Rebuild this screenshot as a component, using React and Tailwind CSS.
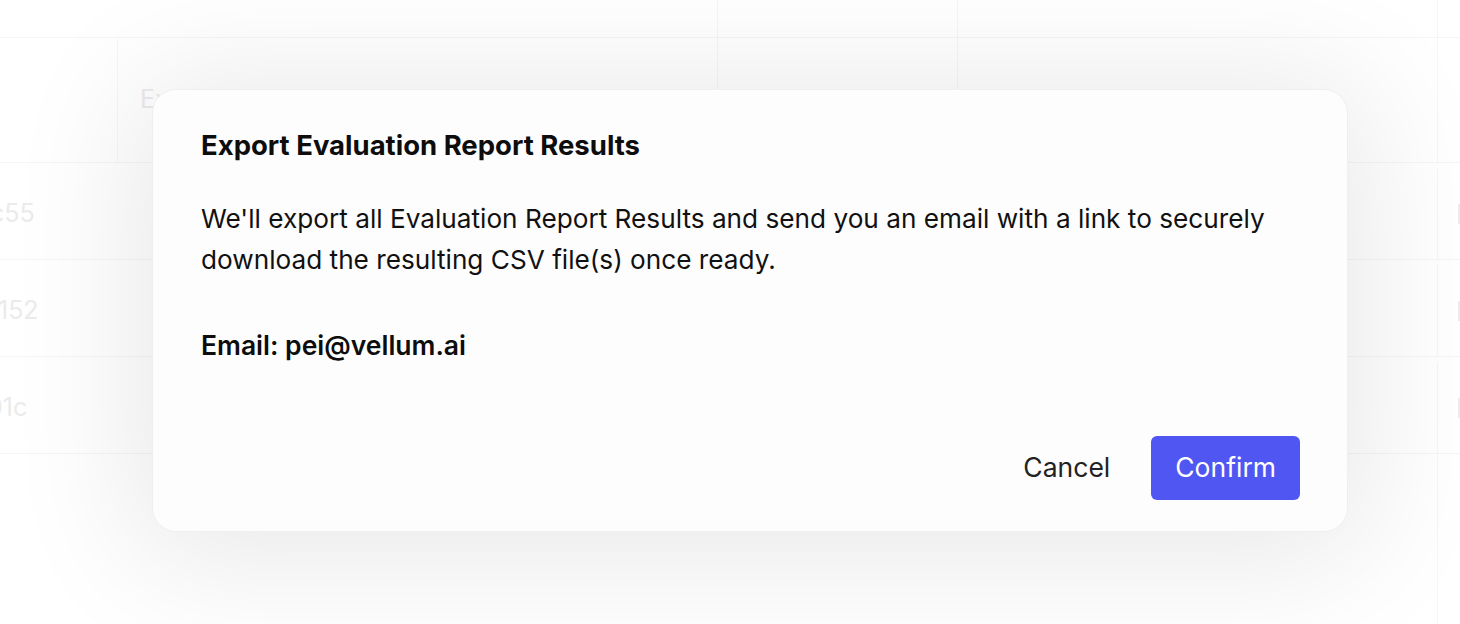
import React from "react";

const rows = [
  { id: "c55", shift: "-ml-[10px]" },
  { id: "152", shift: "-ml-[2px]" },
  { id: "01c", shift: "-ml-[13px]" },
];

const Backdrop = () => {
  return (
    <div className="absolute inset-0 overflow-hidden bg-white text-[25px] text-[#e2e2e2]">
      <div className="flex h-[38px] border-b border-[#f1f1f1]">
        <div className="w-[718px] border-r border-[#f3f3f3]" />
        <div className="w-[240px] border-r border-[#f3f3f3]" />
        <div className="w-[480px] border-r border-[#f3f3f3]" />
        <div className="flex-1" />
      </div>
      <div className="flex h-[125px] border-b border-[#f1f1f1]">
        <div className="w-[118px] border-r border-[#f4f4f4]" />
        <div className="flex w-[600px] items-center border-r border-[#f3f3f3] pl-[22px]">
          Experiment
        </div>
        <div className="w-[240px] border-r border-[#f3f3f3]" />
        <div className="w-[480px] border-r border-[#f3f3f3]" />
        <div className="flex-1" />
      </div>
      {rows.map((r) => (
        <div key={r.id} className="flex h-[97px] items-center border-b border-[#f1f1f1] pt-[5px]">
          <div className="flex h-full w-[1438px] shrink-0 items-center overflow-hidden whitespace-nowrap border-r border-[#f3f3f3]">
            <span className={"inline-block " + r.shift}>{r.id}</span>
          </div>
          <div className="ml-[20px] h-[20px] w-[3px] bg-[#e4e4e4]" />
        </div>
      ))}
      <div className="flex h-full">
        <div className="w-[1438px] border-r border-[#f3f3f3]" />
      </div>
    </div>
  );
};

export default function App() {
  return (
    <div
      className="relative h-[624px] w-[1460px] overflow-hidden"
      style={{ fontFamily: "Inter, 'Noto Sans', sans-serif" }}
    >
      <Backdrop />
      <div className="absolute inset-0 bg-white/30" />
      <div className="absolute left-[152px] top-[89px] flex w-[1196px] flex-col rounded-[24px] border border-[#efefef] bg-[#fdfdfd] pb-[31px] pl-[48px] pr-[47px] pt-[39px] shadow-[0_10px_130px_20px_rgba(0,0,0,0.09)]">
        <h2 className="text-[27.5px] font-bold leading-[32px] text-[#0d0d0d]">
          Export Evaluation Report Results
        </h2>
        <p className="mt-[37px] text-[26.2px] leading-[41px] text-[#111]">
          We'll export all Evaluation Report Results and send you an email with a link to securely
          download the resulting CSV file(s) once ready.
        </p>
        <p className="mt-[45px] text-[26.5px] font-semibold leading-[41px] text-[#0d0d0d]">
          Email: pei@vellum.ai
        </p>
        <div className="mt-[70px] flex items-center justify-end gap-[17px]">
          <button className="h-[64px] rounded-[6px] px-[24px] text-[26.5px] text-[#222]">Cancel</button>
          <button className="h-[64px] rounded-[6px] bg-[#5056f2] px-[24px] text-[26.5px] text-white">
            Confirm
          </button>
        </div>
      </div>
    </div>
  );
}
